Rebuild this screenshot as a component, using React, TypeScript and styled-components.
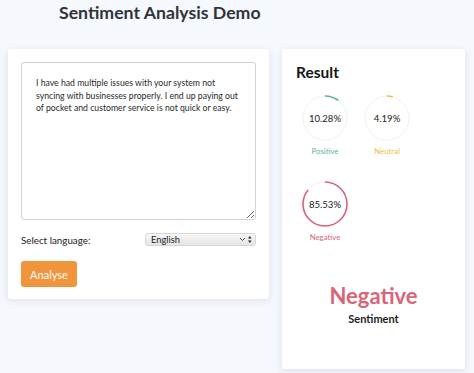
import React from "react";
import styled, { createGlobalStyle } from "styled-components";

const Global = createGlobalStyle`
  html, body { margin: 0; padding: 0; background: #f5f8fd; }
  body { font-family: Lato, "Noto Sans", sans-serif; color: #222; }
  * { box-sizing: border-box; }
`;

const Page = styled.div`
  width: 474px;
  height: 373px;
  padding: 2px 9px 0 8px;
  background: #f5f8fd;
  overflow: hidden;
`;

const Title = styled.h1`
  margin: 0 0 0 51px;
  height: 47px;
  font-size: 17.7px;
  line-height: 22px;
  font-weight: 700;
  color: #30343a;
`;

const Columns = styled.div`
  display: flex;
  align-items: flex-start;
  gap: 13px;
`;

const Card = styled.div<{ $w: number; $h?: number }>`
  width: ${(p) => p.$w}px;
  ${(p) => (p.$h ? `height: ${p.$h}px;` : "")}
  background: #fff;
  border-radius: 3px;
  box-shadow: 0 2px 8px rgba(20, 30, 60, 0.1);
`;

const InputCard = styled(Card)`
  padding: 13px 13px 12px 13px;
  display: flex;
  flex-direction: column;
`;

const TextArea = styled.textarea`
  display: block;
  width: 235px;
  height: 158px;
  margin: 0;
  padding: 14px 12px 0 14px;
  border: 1px solid #cfd2d6;
  border-radius: 3px;
  font-family: Lato, "Noto Sans", sans-serif;
  font-size: 8.7px;
  line-height: 12.5px;
  color: #2a2a2a;
  resize: both;
  outline: none;
`;

const LangRow = styled.div`
  margin-top: 13px;
  height: 13px;
  display: flex;
  align-items: center;
  justify-content: space-between;
`;

const Label = styled.span`
  font-size: 9.8px;
  line-height: 13px;
  color: #222;
  padding-top: 1px;
`;

const SelectWrap = styled.div`
  position: relative;
  width: 111px;
  height: 13px;
`;

const Select = styled.select`
  display: block;
  appearance: none;
  -webkit-appearance: none;
  width: 100%;
  height: 13px;
  margin: 0;
  padding: 0 0 0 5px;
  border: 1px solid #d6d6d6;
  border-radius: 3px;
  background: linear-gradient(#f7f7f7, #e5e5e5);
  font-family: Lato, "Noto Sans", sans-serif;
  font-size: 9.3px;
  line-height: 11px;
  color: #222;
  outline: none;
`;

const SelectIcon = styled.svg`
  position: absolute;
  right: 3px;
  top: 2px;
  pointer-events: none;
`;

const Button = styled.button`
  margin-top: 15px;
  width: 56px;
  height: 26px;
  border: none;
  border-radius: 3px;
  background: #f0953b;
  color: #fff;
  font-family: Lato, "Noto Sans", sans-serif;
  font-size: 11px;
  padding: 0;
  text-align: center;
`;

const ResultCard = styled(Card)`
  padding: 13px 14px 0 14px;
  display: flex;
  flex-direction: column;
`;

const ResultTitle = styled.h2`
  margin: 0;
  font-size: 15.5px;
  line-height: 20px;
  font-weight: 700;
  color: #151515;
`;

const Gauges = styled.div`
  margin-top: 13px;
  display: flex;
  flex-wrap: wrap;
  column-gap: 4px;
  row-gap: 25px;
  width: 124px;
`;

const Gauge = styled.div`
  width: 58px;
  display: flex;
  flex-direction: column;
  align-items: center;
`;

const Ring = styled.div`
  position: relative;
  width: 46px;
  height: 46px;
`;

const RingText = styled.span`
  position: absolute;
  inset: 0;
  display: flex;
  align-items: center;
  justify-content: center;
  font-size: 9.6px;
  color: #222;
`;

const GaugeLabel = styled.span<{ $c: string }>`
  margin-top: 5px;
  font-size: 7.8px;
  line-height: 10px;
  color: ${(p) => p.$c};
`;

const Summary = styled.div`
  margin-top: 41px;
  display: flex;
  flex-direction: column;
  align-items: center;
`;

const Verdict = styled.div<{ $c: string }>`
  font-size: 22px;
  line-height: 26px;
  font-weight: 700;
  color: ${(p) => p.$c};
`;

const VerdictSub = styled.div`
  font-size: 11px;
  line-height: 14px;
  font-weight: 700;
  color: #1c1c1c;
  margin-top: 3px;
`;

const R = 22;
const C = 2 * Math.PI * R;

function Donut({ value, color, label }: { value: number; color: string; label: string }) {
  const len = (value / 100) * C;
  return (
    <Gauge>
      <Ring>
        <svg width="46" height="46" viewBox="0 0 46 46">
          <circle cx="23" cy="23" r={R} fill="none" stroke="#f1f1f1" strokeWidth="1" />
          <circle
            cx="23"
            cy="23"
            r={R}
            fill="none"
            stroke={color}
            strokeWidth="1.6"
            strokeDasharray={`${len} ${C}`}
            transform="rotate(-90 23 23)"
          />
        </svg>
        <RingText>{value.toFixed(2)}%</RingText>
      </Ring>
      <GaugeLabel $c={color}>{label}</GaugeLabel>
    </Gauge>
  );
}

export default function App() {
  return (
    <Page>
      <Global />
      <Title>Sentiment Analysis Demo</Title>
      <Columns>
        <InputCard $w={261}>
          <TextArea defaultValue="I have had multiple issues with your system not syncing with businesses properly. I end up paying out of pocket and customer service is not quick or easy." />
          <LangRow>
            <Label>Select language:</Label>
            <SelectWrap>
              <Select defaultValue="en">
                <option value="en">English</option>
              </Select>
              <SelectIcon width="14" height="9" viewBox="0 0 14 9">
                <path d="M1 3 L3.5 5.5 L6 3" fill="none" stroke="#333" strokeWidth="0.9" />
                <path d="M9 3.6 L10.8 1 L12.6 3.6 Z" fill="#222" />
                <path d="M9 5.4 L10.8 8 L12.6 5.4 Z" fill="#222" />
              </SelectIcon>
            </SelectWrap>
          </LangRow>
          <Button>Analyse</Button>
        </InputCard>
        <ResultCard $w={183} $h={320}>
          <ResultTitle>Result</ResultTitle>
          <Gauges>
            <Donut value={10.28} color="#5cb394" label="Positive" />
            <Donut value={4.19} color="#e9bf45" label="Neutral" />
            <Donut value={85.53} color="#d9657a" label="Negative" />
          </Gauges>
          <Summary>
            <Verdict $c="#d9657a">Negative</Verdict>
            <VerdictSub>Sentiment</VerdictSub>
          </Summary>
        </ResultCard>
      </Columns>
    </Page>
  );
}
